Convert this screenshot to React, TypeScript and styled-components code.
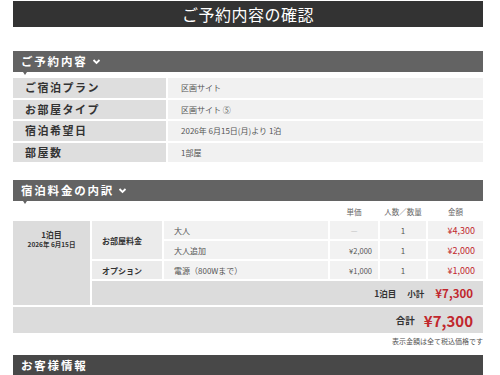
import React, { FC } from "react";
import styled, { createGlobalStyle } from "styled-components";

const GlobalStyle = createGlobalStyle`
  body {
    margin: 0;
    background: #fff;
    font-family: "Noto Sans CJK JP", "Noto Sans", sans-serif;
    color: #333;
  }
`;

const infoRows = [
  { label: "ご宿泊プラン", value: "区画サイト" },
  { label: "お部屋タイプ", value: "区画サイト ⑤" },
  { label: "宿泊希望日", value: "2026年 6月15日(月)より 1泊" },
  { label: "部屋数", value: "1部屋" },
];

const Chevron: FC = () => (
  <svg width="9" height="7" viewBox="0 0 9 7">
    <polyline
      points="1.5,2 4.5,5 7.5,2"
      fill="none"
      stroke="#fff"
      strokeWidth="1.8"
    />
  </svg>
);

const App: FC = () => (
  <>
    <GlobalStyle />
    <Page>
      <TitleBar>ご予約内容の確認</TitleBar>

      <SectionHead>
        ご予約内容 <Chevron />
      </SectionHead>
      <InfoTable>
        {infoRows.map((r) => (
          <React.Fragment key={r.label}>
            <InfoLabel>{r.label}</InfoLabel>
            <InfoValue>{r.value}</InfoValue>
          </React.Fragment>
        ))}
      </InfoTable>

      <SectionHead $top={18}>
        宿泊料金の内訳 <Chevron />
      </SectionHead>
      <PriceGrid>
        <HeadSpacer />
        <ColHead>単価</ColHead>
        <ColHead>人数／数量</ColHead>
        <ColHead>金額</ColHead>

        <NightCell>
          <NightTitle>1泊目</NightTitle>
          <NightDate>2026年 6月15日</NightDate>
        </NightCell>
        <KindCell $rows={2}>お部屋料金</KindCell>
        <ItemCell>大人</ItemCell>
        <NumCell $dim>—</NumCell>
        <QtyCell>1</QtyCell>
        <Amount>¥4,300</Amount>

        <ItemCell>大人追加</ItemCell>
        <NumCell>¥2,000</NumCell>
        <QtyCell>1</QtyCell>
        <Amount>¥2,000</Amount>

        <KindCell>オプション</KindCell>
        <ItemCell>電源（800Wまで）</ItemCell>
        <NumCell>¥1,000</NumCell>
        <QtyCell>1</QtyCell>
        <Amount>¥1,000</Amount>

        <SubtotalRow>
          <SubLabel>1泊目</SubLabel>
          <SubLabel>小計</SubLabel>
          <SubPrice>¥7,300</SubPrice>
        </SubtotalRow>

        <TotalRow>
          <TotalLabel>合計</TotalLabel>
          <TotalPrice>¥7,300</TotalPrice>
        </TotalRow>
      </PriceGrid>
      <Note>表示金額は全て税込価格です</Note>

      <SectionHead $top={7} $dark>
        お客様情報
      </SectionHead>
    </Page>
  </>
);

const Page = styled.div`
  width: 470px;
  margin-left: 13px;
  padding-top: 1px;
`;

const TitleBar = styled.div`
  height: 26px;
  background: #333;
  color: #fff;
  font-size: 16px;
  line-height: 26px;
  text-align: center;
  letter-spacing: 0.5px;
`;

const SectionHead = styled.div<{ $top?: number; $dark?: boolean }>`
  position: relative;
  margin-top: ${(p) => p.$top ?? 24}px;
  height: 21px;
  background: ${(p) => (p.$dark ? "#484848" : "#636363")};
  color: #fff;
  font-size: 11.5px;
  font-weight: 700;
  letter-spacing: 1.8px;
  line-height: 21px;
  padding-left: 8px;
  display: flex;
  align-items: center;
  gap: 4px;

  &::after {
    content: "";
    position: absolute;
    left: 10px;
    top: 21px;
    border-left: 2px solid transparent;
    border-right: 2px solid transparent;
    border-top: 3px solid ${(p) => (p.$dark ? "#484848" : "#636363")};
  }
`;

const InfoTable = styled.div`
  margin-top: 6px;
  display: grid;
  grid-template-columns: 153px 1fr;
  grid-auto-rows: 19.5px;
  gap: 2px;
`;

const InfoLabel = styled.div`
  background: #dedede;
  font-size: 11px;
  font-weight: 700;
  letter-spacing: 1.5px;
  color: #333;
  padding-left: 12px;
  line-height: 19.5px;
`;

const InfoValue = styled.div`
  background: #f1f1f1;
  font-size: 8px;
  color: #555;
  padding-left: 13px;
  line-height: 19.5px;
`;

const PriceGrid = styled.div`
  margin-top: 6px;
  display: grid;
  grid-template-columns: 77px 70px 164px 48px 46px 55px;
  grid-template-rows: 12px 18px 18px 18px 24px 26px;
  gap: 2px;
`;

const HeadSpacer = styled.div`
  grid-column: span 3;
`;

const ColHead = styled.div`
  font-size: 7.5px;
  color: #666;
  text-align: center;
  line-height: 10px;
`;

const NightCell = styled.div`
  grid-row: span 4;
  background: #dcdcdc;
  text-align: center;
  padding-top: 8px;
`;

const NightTitle = styled.div`
  font-size: 8px;
  font-weight: 700;
  color: #333;
  line-height: 11px;
`;

const NightDate = styled.div`
  font-size: 6.5px;
  font-weight: 700;
  color: #333;
  line-height: 9px;
`;

const KindCell = styled.div<{ $rows?: number }>`
  grid-row: span ${(p) => p.$rows ?? 1};
  background: #ebebeb;
  font-size: 8px;
  font-weight: 700;
  color: #333;
  padding-left: 10px;
  display: flex;
  align-items: center;
`;

const ItemCell = styled.div`
  background: #f2f2f2;
  font-size: 8px;
  color: #555;
  padding-left: 10px;
  display: flex;
  align-items: center;
`;

const NumCell = styled.div<{ $dim?: boolean }>`
  background: #f2f2f2;
  font-size: 7.5px;
  color: ${(p) => (p.$dim ? "#bbb" : "#555")};
  display: flex;
  align-items: center;
  justify-content: ${(p) => (p.$dim ? "center" : "flex-end")};
  padding-right: ${(p) => (p.$dim ? 0 : 6)}px;
`;

const QtyCell = styled.div`
  background: #f2f2f2;
  font-size: 8px;
  color: #555;
  display: flex;
  align-items: center;
  justify-content: center;
`;

const Amount = styled.div`
  background: #f2f2f2;
  font-size: 9px;
  color: #c1272d;
  display: flex;
  align-items: center;
  justify-content: flex-end;
  padding-right: 8px;
`;

const SubtotalRow = styled.div`
  grid-column: span 5;
  background: #dcdcdc;
  display: flex;
  align-items: center;
  justify-content: flex-end;
  padding-right: 10px;
  gap: 11px;
`;

const SubLabel = styled.span`
  font-size: 8.5px;
  font-weight: 700;
  color: #333;
`;

const SubPrice = styled.span`
  font-size: 11.5px;
  font-weight: 700;
  color: #c1272d;
`;

const TotalRow = styled.div`
  grid-column: span 6;
  background: #dcdcdc;
  display: flex;
  align-items: center;
  justify-content: flex-end;
  padding-right: 10px;
  gap: 9px;
`;

const TotalLabel = styled.span`
  font-size: 9.5px;
  font-weight: 700;
  color: #333;
`;

const TotalPrice = styled.span`
  font-size: 15px;
  font-weight: 700;
  color: #c1272d;
`;

const Note = styled.div`
  margin-top: 2px;
  text-align: right;
  font-size: 7px;
  color: #555;
  line-height: 13px;
`;

export default App;
